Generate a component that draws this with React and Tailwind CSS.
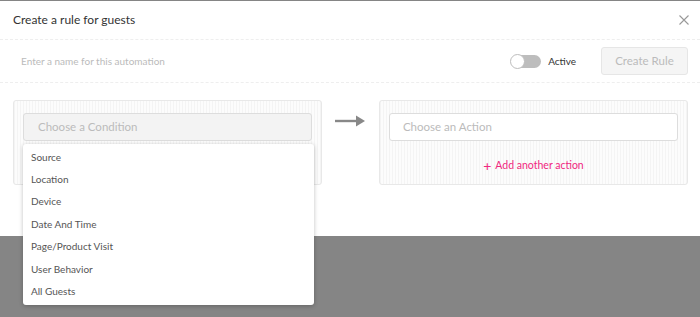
import React, { useState } from "react";

const conditions = [
  "Source",
  "Location",
  "Device",
  "Date And Time",
  "Page/Product Visit",
  "User Behavior",
  "All Guests",
];

const stripes =
  "bg-[repeating-linear-gradient(90deg,#f4f4f4_0px,#f4f4f4_1px,#fcfcfc_1px,#fcfcfc_3px)]";

const App = () => {
  const [active, setActive] = useState(false);

  return (
    <div className="h-[317px] w-[700px] overflow-hidden bg-[#858585] pt-px font-['Lato',sans-serif]">
      <div className="h-[235px] bg-white">
        {/* header */}
        <div className="flex h-[39px] items-center justify-between border-b border-dashed border-[#eeeeee] pl-[13px] pr-[10px]">
          <h2 className="text-[12px] text-[#333333]">Create a rule for guests</h2>
          <svg width="12" height="12" viewBox="0 0 12 12" className="text-[#999999]">
            <path d="M1.5 1.5 L10.5 10.5 M10.5 1.5 L1.5 10.5" stroke="currentColor" strokeWidth="1.1" />
          </svg>
        </div>

        {/* name row */}
        <div className="flex h-[43px] items-center border-b border-dashed border-[#eeeeee] pl-[21px] pr-[12px]">
          <input
            className="flex-1 bg-transparent text-[10px] text-[#555555] outline-none placeholder:text-[#bbbbbb]"
            placeholder="Enter a name for this automation"
          />
          <button
            onClick={() => setActive(!active)}
            className={`relative mr-[7px] h-[13px] w-[30px] rounded-full ${active ? "bg-[#e91e63]" : "bg-[#bdbdbd]"}`}
          >
            <span
              className={`absolute top-[-1px] h-[15px] w-[15px] rounded-full border border-[#bdbdbd] bg-white ${active ? "left-[15px]" : "left-[-1px]"}`}
            />
          </button>
          <span className="mr-[25px] text-[10px] text-[#333333]">Active</span>
          <button className="h-[28px] w-[87px] rounded-[3px] border border-[#e6e6e6] bg-[#f5f5f5] text-[11.5px] text-[#bbbbbb]">
            Create Rule
          </button>
        </div>

        {/* rule builder */}
        <div className="mt-[17px] flex items-start pl-[13px] pr-[12px]">
          <div className={`relative h-[85px] w-[310px] rounded-[3px] border border-[#e8e8e8] px-[9px] pt-[12px] ${stripes}`}>
            <div className="flex h-[28px] items-center rounded-[3px] border border-[#dddddd] bg-[#f3f3f3] px-[14px] text-[11.5px] text-[#bbbbbb]">
              Choose a Condition
            </div>
            {/* open dropdown */}
            <ul className="absolute left-[9px] top-[43px] z-10 w-[291px] rounded-[3px] bg-white py-[2px] shadow-[0_1px_4px_rgba(0,0,0,0.25)]">
              {conditions.map((c) => (
                <li key={c} className="flex h-[22.4px] items-center px-[8px] text-[10px] text-[#555555]">
                  {c}
                </li>
              ))}
            </ul>
          </div>

          <div className="flex h-[42px] w-[57px] items-center justify-center">
            <svg width="31" height="12" viewBox="0 0 31 12">
              <path d="M0 6 H22" stroke="#888888" strokeWidth="2.4" />
              <path d="M21 0.5 L30 6 L21 11.5 Z" fill="#888888" />
            </svg>
          </div>

          <div className={`flex h-[85px] w-[310px] flex-col rounded-[3px] border border-[#e8e8e8] px-[9px] pt-[12px] ${stripes}`}>
            <div className="flex h-[28px] items-center rounded-[3px] border border-[#dddddd] bg-white px-[13px] text-[11.5px] text-[#bbbbbb]">
              Choose an Action
            </div>
            <button className="mt-[17px] flex items-center justify-center gap-[4px] text-[10.5px] text-[#f0287f]">
              <span className="text-[14px] leading-none">+</span>
              Add another action
            </button>
          </div>
        </div>
      </div>
    </div>
  );
};

export default App;
